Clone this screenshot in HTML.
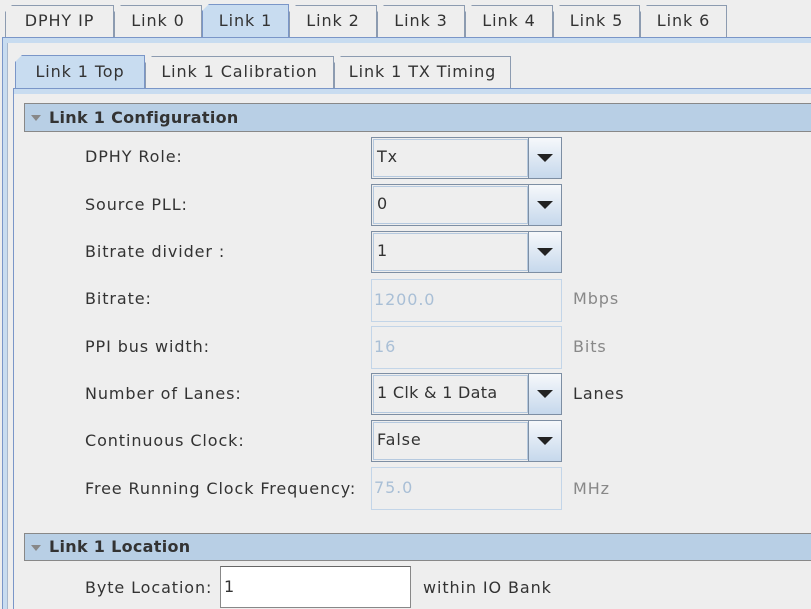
<!DOCTYPE html>
<html><head><style>
*{margin:0;padding:0;box-sizing:border-box}
html,body{width:811px;height:609px;overflow:hidden}
body{background:#eeeeee;font-family:"DejaVu Sans","Liberation Sans",sans-serif;font-size:16px;letter-spacing:0.9px;color:#333;position:relative}
.a{position:absolute}
.tab{position:absolute;border:1px solid #8c9bb0;border-bottom:none;background:#eeeeee;text-align:center;color:#333;clip-path:polygon(7px 0,100% 0,100% 100%,0 100%,0 7px)}
.sel{background:#c8dcf0;border-color:#7a96c8}
.lbl{position:absolute;left:85px;color:#333;line-height:20px}
.combo{position:absolute;left:371px;width:191px;height:42px;border:1px solid #7d8ea3;background:#eeeeee}
.combo .t{position:absolute;left:1px;top:1px;width:155px;height:38px;border:1px solid #b5c9df;padding:6px 3px;line-height:22px}
.combo .b{position:absolute;right:0;top:0;width:33px;height:40px;border-left:1px solid #7d8ea3;background:linear-gradient(#f6f8fb,#c6d8ec)}
.combo .b::after{content:"";position:absolute;left:8px;top:16px;border-left:8px solid transparent;border-right:8px solid transparent;border-top:8px solid #222}
.dis{position:absolute;left:371px;width:191px;height:43px;border:1px solid #c3d5e8;color:#a9bfd6;padding:9px 2px;line-height:22px}
.unit{position:absolute;left:573px;color:#888;line-height:20px}
.hdr{position:absolute;left:24px;width:800px;border:1px solid #888;background:#b8cfe5;font-weight:bold;padding-left:24px;color:#333;letter-spacing:0.3px}
.hdr::before{content:"";position:absolute;left:6px;top:11px;border-left:5px solid transparent;border-right:5px solid transparent;border-top:6px solid #888}
</style></head><body>
<div class="tab" style="left:5px;top:5px;width:109px;height:33px;line-height:30px">DPHY IP</div>
<div class="tab" style="left:114px;top:5px;width:88px;height:33px;line-height:30px">Link 0</div>
<div class="tab sel" style="left:202px;top:4px;width:87px;height:34px;line-height:31px">Link 1</div>
<div class="tab" style="left:289px;top:5px;width:88px;height:33px;line-height:30px">Link 2</div>
<div class="tab" style="left:377px;top:5px;width:88px;height:33px;line-height:30px">Link 3</div>
<div class="tab" style="left:465px;top:5px;width:88px;height:33px;line-height:30px">Link 4</div>
<div class="tab" style="left:553px;top:5px;width:87px;height:33px;line-height:30px">Link 5</div>
<div class="tab" style="left:640px;top:5px;width:87px;height:33px;line-height:30px">Link 6</div>
<div class="a" style="left:2px;top:37px;width:809px;height:572px;border-top:1px solid #7a96c8;border-left:1px solid #7a96c8"></div>
<div class="a" style="left:3px;top:38px;width:808px;height:5px;background:#c8dcf0"></div>
<div class="a" style="left:3px;top:38px;width:4px;height:571px;background:#c8dcf0"></div>
<div class="a" style="left:7px;top:43px;width:1px;height:566px;background:#a8b8cc"></div>

<div class="tab sel" style="left:15px;top:55px;width:130px;height:34px;line-height:31px">Link 1 Top</div>
<div class="tab" style="left:145px;top:56px;width:189px;height:33px;line-height:30px">Link 1 Calibration</div>
<div class="tab" style="left:334px;top:56px;width:177px;height:33px;line-height:30px">Link 1 TX Timing</div>
<div class="a" style="left:13px;top:88px;width:798px;height:521px;border-top:1px solid #7a96c8;border-left:1px solid #7a96c8"></div>
<div class="a" style="left:14px;top:89px;width:797px;height:5px;background:#c8dcf0"></div>

<div class="hdr" style="top:103px;height:29px;line-height:27px">Link 1 Configuration</div>

<div class="lbl" style="top:147px">DPHY Role:</div>
<div class="combo" style="top:137px"><div class="t">Tx</div><div class="b"></div></div>
<div class="lbl" style="top:195px">Source PLL:</div>
<div class="combo" style="top:184px"><div class="t">0</div><div class="b"></div></div>
<div class="lbl" style="top:242px">Bitrate divider :</div>
<div class="combo" style="top:231px"><div class="t">1</div><div class="b"></div></div>
<div class="lbl" style="top:289px">Bitrate:</div>
<div class="dis" style="top:279px">1200.0</div>
<div class="unit" style="top:289px">Mbps</div>
<div class="lbl" style="top:337px">PPI bus width:</div>
<div class="dis" style="top:326px">16</div>
<div class="unit" style="top:337px">Bits</div>
<div class="lbl" style="top:384px">Number of Lanes:</div>
<div class="combo" style="top:373px"><div class="t" style="letter-spacing:0.3px">1 Clk &amp; 1 Data</div><div class="b"></div></div>
<div class="unit" style="top:384px;color:#333">Lanes</div>
<div class="lbl" style="top:431px">Continuous Clock:</div>
<div class="combo" style="top:420px"><div class="t">False</div><div class="b"></div></div>
<div class="lbl" style="top:479px">Free Running Clock Frequency:</div>
<div class="dis" style="top:467px">75.0</div>
<div class="unit" style="top:479px">MHz</div>

<div class="hdr" style="top:533px;height:28px;line-height:26px">Link 1 Location</div>
<div class="lbl" style="top:578px">Byte Location:</div>
<div class="a" style="left:220px;top:566px;width:191px;height:42px;border:1px solid #888;border-top-color:#666;background:#fff;padding:9px 3px;line-height:22px">1</div>
<div class="a" style="left:423px;top:578px;line-height:20px">within IO Bank</div>
</body></html>
